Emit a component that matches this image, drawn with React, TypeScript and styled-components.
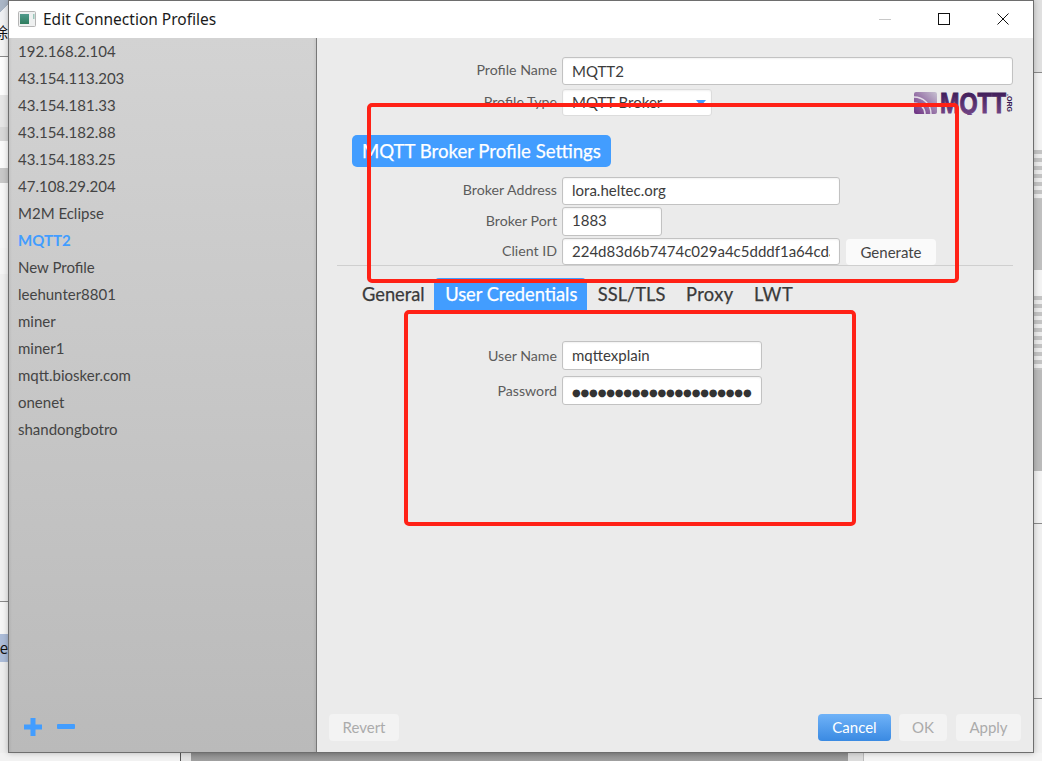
import React from "react";
import styled, { createGlobalStyle } from "styled-components";

const GlobalStyle = createGlobalStyle`
  html, body {
    margin: 0;
    padding: 0;
    width: 1042px;
    height: 761px;
    overflow: hidden;
    background: #f2f2f2;
    font-family: Lato, "Open Sans", sans-serif;
  }
`;

const Desktop = styled.div`
  position: relative;
  width: 1042px;
  height: 761px;
  display: flex;
  flex-direction: column;
  overflow: hidden;
`;

const MainRow = styled.div`
  display: flex;
  height: 753px;
`;

const SideStrip = styled.div`
  width: 8px;
  flex: none;
  display: flex;
  flex-direction: column;
  overflow: hidden;
`;

const StripBand = styled.div<{ $h: number; $bg: string; $line?: boolean }>`
  height: ${(p) => p.$h}px;
  flex: none;
  background: ${(p) => p.$bg};
  border-bottom: ${(p) => (p.$line ? "1px solid #8a8a8a" : "none")};
  box-sizing: border-box;
  font-family: "Noto Sans CJK SC", sans-serif;
  font-size: 15px;
  line-height: ${(p) => p.$h}px;
  color: #111;
  white-space: nowrap;
  direction: rtl;
`;

const BottomStrip = styled.div`
  height: 8px;
  display: flex;
`;

const BottomBand = styled.div<{ $w: number; $bg: string }>`
  width: ${(p) => p.$w}px;
  flex: none;
  background: ${(p) => p.$bg};
`;

const Window = styled.div`
  width: 1026px;
  height: 753px;
  flex: none;
  box-sizing: border-box;
  border: 1px solid #6e6e6e;
  background: #ebebeb;
  display: flex;
  flex-direction: column;
  box-shadow: 0 0 6px rgba(0, 0, 0, 0.25);
  z-index: 1;
`;

const TitleBar = styled.div`
  height: 37px;
  flex: none;
  box-sizing: border-box;
  background: #fff;
  display: flex;
  align-items: center;
  padding: 0 1px 2px 9px;
`;

const TitleText = styled.span`
  margin-left: 7px;
  font-family: "Noto Sans", sans-serif;
  font-size: 15.5px;
  color: #1a1a1a;
`;

const WindowControls = styled.div`
  margin-left: auto;
  display: flex;
  height: 100%;
  align-items: center;
`;

const ControlSlot = styled.div`
  width: 59px;
  display: flex;
  justify-content: center;
`;

const Body = styled.div`
  flex: 1;
  display: flex;
  min-height: 0;
`;

const Sidebar = styled.div`
  width: 307px;
  flex: none;
  border-right: 1px solid #777;
  background: linear-gradient(180deg, #d3d3d3 0%, #bababa 100%);
  box-shadow: inset 3px 0 3px -2px rgba(0, 0, 0, 0.08), inset -3px 0 3px -2px rgba(0, 0, 0, 0.08);
  display: flex;
  flex-direction: column;
`;

const ProfileList = styled.div`
  display: flex;
  flex-direction: column;
`;

const ProfileItem = styled.div<{ $active?: boolean }>`
  height: 27px;
  line-height: 27px;
  padding-left: 9px;
  font-size: 15px;
  color: ${(p) => (p.$active ? "#429dff" : "#444")};
  font-weight: ${(p) => (p.$active ? 700 : 400)};
`;

const SidebarFooter = styled.div`
  margin-top: auto;
  display: flex;
  align-items: center;
  gap: 15px;
  padding: 0 0 16px 15px;
`;

const Pane = styled.div`
  flex: 1;
  min-width: 0;
  display: flex;
  flex-direction: column;
  padding-top: 19px;
`;

const FormRow = styled.div<{ $gap?: number }>`
  display: flex;
  align-items: center;
  margin-top: ${(p) => p.$gap ?? 0}px;
  padding-right: 20px;
`;

const Label = styled.div<{ $lift?: boolean }>`
  width: 240px;
  flex: none;
  box-sizing: border-box;
  margin-right: 5px;
  padding-bottom: ${(p) => (p.$lift ? 3 : 0)}px;
  text-align: right;
  font-size: 14.2px;
  color: #5c5c5c;
`;

const Field = styled.div<{ $w?: number; $h?: number; $lift?: boolean }>`
  box-sizing: border-box;
  width: ${(p) => (p.$w ? `${p.$w}px` : "auto")};
  flex: ${(p) => (p.$w ? "none" : 1)};
  height: ${(p) => p.$h ?? 28}px;
  line-height: ${(p) => (p.$h ?? 28) - (p.$lift ? 4 : 2)}px;
  padding: 0 9px;
  background: #fff;
  border: 1px solid #c2c2c2;
  border-radius: 3px;
  box-shadow: inset 0 1px 2px rgba(0, 0, 0, 0.06);
  font-size: 15px;
  color: #3c3c3c;
  white-space: nowrap;
`;

const FieldText = styled.div`
  overflow: hidden;
`;

const SelectBox = styled(Field)`
  border-color: #dcdcdc;
  display: flex;
  align-items: center;
  justify-content: space-between;
  padding-right: 5px;
`;

const Caret = styled.div`
  width: 0;
  height: 0;
  border-left: 5px solid transparent;
  border-right: 5px solid transparent;
  border-top: 6px solid #429dff;
`;

const Logo = styled.svg`
  margin-left: auto;
  flex: none;
`;

const SectionTitle = styled.div`
  align-self: flex-start;
  margin: 19px 0 10px 35px;
  height: 32px;
  line-height: 32px;
  padding: 0 10px;
  background: #429dff;
  color: #fff;
  border-radius: 5px;
  font-size: 18.6px;
  -webkit-text-stroke: 0.25px #fff;
`;

const Separator = styled.div`
  height: 1px;
  margin: 0 20px;
  background: #cfcfcf;
`;

const TabBar = styled.div`
  display: flex;
  margin: 12px 0 0 34px;
`;

const Tab = styled.div<{ $active?: boolean; $wide?: boolean }>`
  height: 32px;
  line-height: 32px;
  padding: 0 9.5px 0 11px;
  font-size: 18.3px;
  letter-spacing: ${(p) => (p.$wide ? "0.4px" : "0")};
  -webkit-text-stroke: 0.25px ${(p) => (p.$active ? "#fff" : "#3a3a3a")};
  color: ${(p) => (p.$active ? "#fff" : "#3a3a3a")};
  background: ${(p) => (p.$active ? "#429dff" : "transparent")};
  border-radius: 5px 5px 0 0;
`;

const CredentialsForm = styled.div`
  margin-top: 31px;
  display: flex;
  flex-direction: column;
  gap: 6px;
`;

const Bullets = styled.span`
  font-family: "DejaVu Sans", sans-serif;
  font-size: 10px;
  letter-spacing: -0.18px;
  color: #333;
`;

const PaneFooter = styled.div`
  margin-top: auto;
  display: flex;
  gap: 8px;
  padding: 0 12px 11px;
`;

const FooterButton = styled.div<{ $w: number; $primary?: boolean; $nudge?: boolean }>`
  width: ${(p) => p.$w}px;
  height: 27px;
  line-height: 27px;
  text-align: center;
  font-size: 15px;
  border-radius: 4px;
  color: ${(p) => (p.$primary ? "#fff" : "#ababab")};
  background: ${(p) => (p.$primary ? "linear-gradient(180deg, #6fb2f8, #3a8ae2)" : "#f3f3f3")};
  ${(p) => (p.$primary ? "margin-left: auto;" : "")}
  ${(p) => (p.$nudge ? "margin-left: 1px;" : "")}
`;

const GenerateButton = styled.div`
  margin-left: 6px;
  align-self: flex-end;
  width: 90px;
  height: 26px;
  line-height: 27px;
  flex: none;
  text-align: center;
  background: #fafafa;
  border-radius: 4px;
  font-size: 15px;
  color: #444;
`;

const Annotation = styled.div<{ $x: number; $y: number; $w: number; $h: number }>`
  position: absolute;
  left: ${(p) => p.$x}px;
  top: ${(p) => p.$y}px;
  width: ${(p) => p.$w}px;
  height: ${(p) => p.$h}px;
  box-sizing: border-box;
  border: 4px solid #ff2116;
  border-radius: 5px;
  z-index: 2;
`;

const profiles = [
  "192.168.2.104",
  "43.154.113.203",
  "43.154.181.33",
  "43.154.182.88",
  "43.154.183.25",
  "47.108.29.204",
  "M2M Eclipse",
  "MQTT2",
  "New Profile",
  "leehunter8801",
  "miner",
  "miner1",
  "mqtt.biosker.com",
  "onenet",
  "shandongbotro",
];

const blurredText = "repeating-linear-gradient(180deg, #c4c4c4 0 4px, #ececec 4px 8px)";

const leftBands: { h: number; bg: string; line?: boolean; text?: string }[] = [
  { h: 20, bg: "linear-gradient(135deg, #aab6c6 45%, #eef0f3 45%)" },
  { h: 24, bg: "#f3f3f3", text: "除" },
  { h: 13, bg: "#f3f3f3", line: true },
  { h: 38, bg: "#fdfdfd" },
  { h: 32, bg: "#e6e6e6" },
  { h: 14, bg: "#d8d8d8" },
  { h: 27, bg: "#fbfbfb" },
  { h: 15, bg: "#c8c8c8" },
  { h: 65, bg: "#f8f8f8" },
  { h: 26, bg: "#f6f6f6" },
  { h: 328, bg: "#f0f0f0", line: true },
  { h: 32, bg: "#f6f6f6" },
  { h: 28, bg: "#acbcd8", text: "ne" },
  { h: 91, bg: "#eeeeee" },
];

const rightBands: { h: number; bg: string; line?: boolean }[] = [
  { h: 73, bg: "#e0e0e0", line: true },
  { h: 77, bg: "#f3f3f3" },
  { h: 49, bg: blurredText },
  { h: 71, bg: "#c0c0c0" },
  { h: 26, bg: "#f3f3f3" },
  { h: 74, bg: blurredText },
  { h: 101, bg: "#bbbbbb" },
  { h: 53, bg: "#f3f3f3", line: true },
  { h: 175, bg: "#f0f0f0", line: true },
  { h: 54, bg: "#f0f0f0" },
];

const WindowIcon = () => (
  <svg width="18" height="16" viewBox="0 0 18 16">
    <defs>
      <linearGradient id="iconFill" x1="0" y1="0" x2="0" y2="1">
        <stop offset="0" stopColor="#4f9a8c" />
        <stop offset="1" stopColor="#2f7d5e" />
      </linearGradient>
    </defs>
    <rect x="0.5" y="0.5" width="17" height="15" rx="1" fill="#eef0f0" stroke="#b5b5b5" />
    <rect x="2" y="3" width="9" height="10" fill="url(#iconFill)" />
    <rect x="15" y="3" width="1.5" height="5" fill="#9cc7bb" />
  </svg>
);

const MinimizeIcon = () => (
  <svg width="12" height="12" viewBox="0 0 12 12">
    <path d="M0 6.5H12" stroke="#c8c8c8" strokeWidth="1" />
  </svg>
);

const MaximizeIcon = () => (
  <svg width="12" height="12" viewBox="0 0 12 12">
    <rect x="0.5" y="0.5" width="11" height="11" fill="none" stroke="#111" />
  </svg>
);

const CloseIcon = () => (
  <svg width="12" height="12" viewBox="0 0 12 12">
    <path d="M0.5 0.5L11.5 11.5M11.5 0.5L0.5 11.5" stroke="#111" strokeWidth="1" />
  </svg>
);

const PlusIcon = () => (
  <svg width="18" height="18" viewBox="0 0 18 18">
    <path d="M6.5 0H11.5V6.5H18V11.5H11.5V18H6.5V11.5H0V6.5H6.5Z" fill="#429dff" />
  </svg>
);

const MinusIcon = () => (
  <svg width="18" height="18" viewBox="0 0 18 18">
    <rect x="0" y="6" width="18" height="5" rx="1" fill="#429dff" />
  </svg>
);

const MqttLogo = () => (
  <Logo width="99" height="24" viewBox="0 0 99 24">
    <defs>
      <linearGradient id="mqttText" x1="0" y1="0" x2="0" y2="1">
        <stop offset="0" stopColor="#34144f" />
        <stop offset="1" stopColor="#7b4c8e" />
      </linearGradient>
      <linearGradient id="mqttBadge" x1="0" y1="1" x2="1" y2="0">
        <stop offset="0" stopColor="#6a2c80" />
        <stop offset="1" stopColor="#c8c2d2" />
      </linearGradient>
    </defs>
    <rect x="0" y="1" width="23" height="22" rx="2" fill="url(#mqttBadge)" />
    <path d="M0 6C9 6 17 13 17 23M0 12C6 12 11 17 11 23" fill="none" stroke="#e4dfe8" strokeWidth="1.5" />
    <text
      x="26"
      y="22"
      fontFamily="Liberation Sans"
      fontWeight="700"
      fontSize="29"
      textLength="66"
      lengthAdjust="spacingAndGlyphs"
      fill="url(#mqttText)"
      stroke="url(#mqttText)"
      strokeWidth="1"
    >
      MQTT
    </text>
    <text
      transform="translate(93 3) rotate(90)"
      fontFamily="Liberation Sans"
      fontWeight="700"
      fontSize="7"
      textLength="18"
      lengthAdjust="spacingAndGlyphs"
      fill="#34144f"
    >
      .ORG
    </text>
  </Logo>
);

export default function App() {
  return (
    <Desktop>
      <GlobalStyle />
      <MainRow>
        <SideStrip>
          {leftBands.map((b, i) => (
            <StripBand key={i} $h={b.h} $bg={b.bg} $line={b.line}>
              {b.text}
            </StripBand>
          ))}
        </SideStrip>
        <Window>
          <TitleBar>
            <WindowIcon />
            <TitleText>Edit Connection Profiles</TitleText>
            <WindowControls>
              <ControlSlot>
                <MinimizeIcon />
              </ControlSlot>
              <ControlSlot>
                <MaximizeIcon />
              </ControlSlot>
              <ControlSlot>
                <CloseIcon />
              </ControlSlot>
            </WindowControls>
          </TitleBar>
          <Body>
            <Sidebar>
              <ProfileList>
                {profiles.map((name) => (
                  <ProfileItem key={name} $active={name === "MQTT2"}>
                    {name}
                  </ProfileItem>
                ))}
              </ProfileList>
              <SidebarFooter>
                <PlusIcon />
                <MinusIcon />
              </SidebarFooter>
            </Sidebar>
            <Pane>
              <FormRow>
                <Label $lift>Profile Name</Label>
                <Field>MQTT2</Field>
              </FormRow>
              <FormRow $gap={4}>
                <Label $lift>Profile Type</Label>
                <SelectBox $w={150} $h={27}>
                  MQTT Broker
                  <Caret />
                </SelectBox>
                <MqttLogo />
              </FormRow>
              <SectionTitle>MQTT Broker Profile Settings</SectionTitle>
              <FormRow>
                <Label $lift>Broker Address</Label>
                <Field $w={278} $lift>
                  lora.heltec.org
                </Field>
              </FormRow>
              <FormRow $gap={2}>
                <Label $lift>Broker Port</Label>
                <Field $w={100} $h={29} $lift>
                  1883
                </Field>
              </FormRow>
              <FormRow $gap={2}>
                <Label $lift>Client ID</Label>
                <Field $w={278} $h={27}>
                  <FieldText>224d83d6b7474c029a4c5dddf1a64cda</FieldText>
                </Field>
                <GenerateButton>Generate</GenerateButton>
              </FormRow>
              <Separator />
              <TabBar>
                <Tab>General</Tab>
                <Tab $active>User Credentials</Tab>
                <Tab>SSL/TLS</Tab>
                <Tab $wide>Proxy</Tab>
                <Tab $wide>LWT</Tab>
              </TabBar>
              <CredentialsForm>
                <FormRow>
                  <Label>User Name</Label>
                  <Field $w={200} $h={29}>
                    mqttexplain
                  </Field>
                </FormRow>
                <FormRow>
                  <Label>Password</Label>
                  <Field $w={200} $h={29}>
                    <Bullets>●●●●●●●●●●●●●●●●●●●●●</Bullets>
                  </Field>
                </FormRow>
              </CredentialsForm>
              <PaneFooter>
                <FooterButton $w={70}>Revert</FooterButton>
                <FooterButton $w={73} $primary>
                  Cancel
                </FooterButton>
                <FooterButton $w={48}>OK</FooterButton>
                <FooterButton $w={65} $nudge>
                  Apply
                </FooterButton>
              </PaneFooter>
            </Pane>
          </Body>
        </Window>
        <SideStrip>
          {rightBands.map((b, i) => (
            <StripBand key={i} $h={b.h} $bg={b.bg} $line={b.line} />
          ))}
        </SideStrip>
      </MainRow>
      <BottomStrip>
        <BottomBand $w={180} $bg="#f2f2f2" />
        <BottomBand $w={1} $bg="#555" />
        <BottomBand $w={10} $bg="#e2e2e2" />
        <BottomBand $w={657} $bg="linear-gradient(180deg, #8c8c8c, #a0a0a0)" />
        <BottomBand $w={15} $bg="#dcdcdc" />
        <BottomBand $w={1} $bg="#bbb" />
        <BottomBand $w={178} $bg="#f4f4f4" />
      </BottomStrip>
      <Annotation $x={367} $y={103} $w={592} $h={180} />
      <Annotation $x={404} $y={310} $w={452} $h={216} />
    </Desktop>
  );
}
